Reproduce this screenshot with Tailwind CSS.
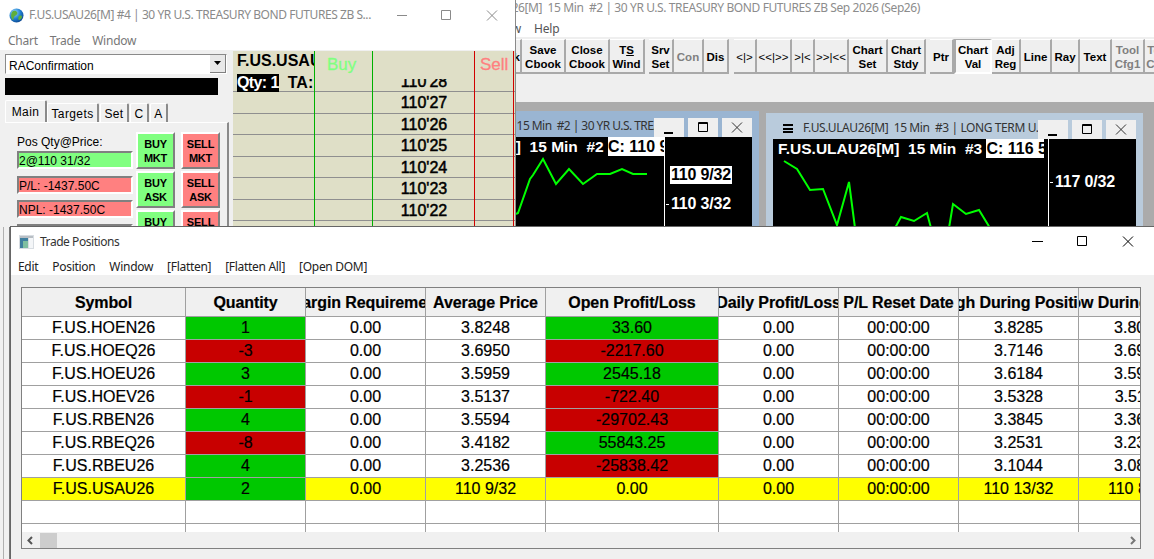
<!DOCTYPE html>
<html>
<head>
<meta charset="utf-8">
<script src="https://cdn.jsdelivr.net/npm/@tailwindcss/browser@4"></script>
</head>
<body class="m-0 overflow-hidden">
<div class="relative w-[1154px] h-[559px] overflow-hidden bg-[#ababab] font-['Liberation_Sans',sans-serif] text-black">

  <!-- Main window chrome -->
  <div class="absolute left-0 top-0 w-[1154px] flex flex-col">
    <div class="h-[37px] bg-white relative">
      <div class="absolute right-[234px] top-0 h-[15px] flex items-center whitespace-nowrap font-['Noto_Sans',sans-serif] text-[12px] text-[#8c8c8c] tracking-[-0.4px]">F.US.USAU26[M]&nbsp; 15 Min&nbsp; #2 | 30 YR U.S. TREASURY BOND FUTURES ZB Sep 2026 (Sep26)</div>
      <div class="absolute left-[470px] top-[21px] w-[100px] flex whitespace-nowrap font-['Noto_Sans',sans-serif] text-[12px] leading-[16px] text-[#555] tracking-[-0.2px]">
        <span class="w-[51px] text-right">Window</span><span class="ml-[13px]">Help</span>
      </div>
    </div>
    <div class="h-[65px] bg-[#efefef] pt-[2px] pl-[516px]">
      <div class="flex h-[35px] w-[660px] text-[11.5px] leading-[14px] font-bold text-center whitespace-nowrap *:shrink-0 *:flex *:items-center *:justify-center *:pt-[1px] *:border-r-2 *:border-b-2 *:border-[#a9a9a9] *:border-t *:border-t-white">
        <div class="w-[6px] overflow-hidden justify-end!">k</div>
        <div class="w-[44px]"><span>Save<br>Cbook</span></div>
        <div class="w-[44px]"><span>Close<br>Cbook</span></div>
        <div class="w-[35px]"><span>T<span class="underline">S</span><br>Wind</span></div>
        <div class="w-[4px] !border-0"></div>
        <div class="w-[25px]"><span>Srv<br>Set</span></div>
        <div class="w-[30px] text-[#808080]">Con</div>
        <div class="w-[25px]">Dis</div>
        <div class="w-[5px] !border-0"></div>
        <div class="w-[23px] font-normal">&lt;|&gt;</div>
        <div class="w-[35px] font-normal">&lt;&lt;|&gt;&gt;</div>
        <div class="w-[23px] font-normal">&gt;|&lt;</div>
        <div class="w-[34px] font-normal">&gt;&gt;|&lt;&lt;</div>
        <div class="w-[39px]"><span>Chart<br>Set</span></div>
        <div class="w-[38px]"><span>Chart<br>Stdy</span></div>
        <div class="w-[4px] !border-0"></div>
        <div class="w-[24px]">Ptr</div>
        <div class="w-[38px] !border-r-white !border-b-white !border-t-[#a9a9a9] border-l-2 border-l-[#a9a9a9] bg-[#f7f7f7]"><span>Chart<br>Val</span></div>
        <div class="w-[29px]"><span>Adj<br>Reg</span></div>
        <div class="w-[31px]">Line</div>
        <div class="w-[28px]">Ray</div>
        <div class="w-[32px]">Text</div>
        <div class="w-[33px] text-[#808080]"><span>Tool<br>Cfg1</span></div>
        <div class="w-[30px] text-[#808080]"><span>Tool<br>Cfg2</span></div>
      </div>
    </div>
  </div>

  <!-- Chart #2 -->
  <div class="absolute left-[400px] top-[111px] w-[359px] h-[130px] bg-[#9ab5d2] pl-[7px] pr-[7px]">
    <div class="h-[26px] relative flex">
      <div class="flex-1 overflow-hidden pt-[6px] pl-[21px] font-['Noto_Sans',sans-serif] text-[12px] leading-[18px] whitespace-nowrap text-[#333] tracking-[-0.55px]">F.US.USAU26[M]&nbsp; 15 Min&nbsp; #2 | 30 YR U.S. TREASURY BOND FUTURES ZB Sep 2026</div>
      <div class="flex gap-[4px] mt-[7px] h-[19px] w-[98px] shrink-0">
        <div class="w-[30px] bg-[#efefef] flex items-center justify-center"><svg width="30" height="19" viewBox="0 0 30 19"><path d="M10 15h9" stroke="#000" stroke-width="2"/></svg></div>
        <div class="w-[30px] bg-[#efefef] flex items-center justify-center"><svg width="30" height="19" viewBox="0 0 30 19"><path d="M10.500 4.500h9v9h-9z M10 5.500h10" stroke="#000" fill="none"/></svg></div>
        <div class="w-[30px] bg-[#efefef] flex items-center justify-center"><svg width="30" height="19" viewBox="0 0 30 19"><path d="M10 4.500l10 10M20 4.500l-10 10" stroke="#333" fill="none"/></svg></div>
      </div>
    </div>
    <div class="relative h-[100px] bg-black text-white">
      <div class="absolute left-0 top-0 w-[258px] h-[100px] border-r border-white overflow-hidden">
        <div class="absolute right-0 top-0 h-[19px] flex text-[16px] leading-[19px] font-bold whitespace-nowrap">
          <span class="text-[15.5px]">F.US.USAU26[M]&nbsp; 15 Min&nbsp; #2&nbsp;</span><span class="bg-white text-black w-[56px] overflow-hidden">C: 110 9/32</span>
        </div>
      </div>
      <div class="absolute left-[263px] top-[29px] w-[62px] h-[18px] bg-white text-black flex items-center justify-center text-[16px] font-bold whitespace-nowrap tracking-[-0.15px]">110 9/32</div>
      <div class="absolute left-[263px] top-[58px] w-[62px] h-[18px] flex items-center justify-center text-[16px] font-bold whitespace-nowrap tracking-[-0.15px]">110 3/32</div>
      <div class="absolute left-[259px] top-[67px] w-[3px] h-px bg-white"></div>
      <svg class="absolute left-0 top-0" width="258" height="100" viewBox="407 137 258 100"><polyline fill="none" stroke="#00ff00" stroke-width="2" points="516,214 518,213 530,179 533,175 543,159 556,184 569,169 583,184 597,174 610,174 622,169 633,174 647,174"/></svg>
    </div>
  </div>

  <!-- Chart #3 -->
  <div class="absolute left-[766px] top-[113px] w-[377px] h-[130px] bg-[#b9cbdc] pl-[7px] pr-[7px]">
    <div class="h-[26px] relative flex">
      <div class="w-[10px] ml-[10px] mr-[10px] mt-[11px] h-[9px] flex flex-col justify-between shrink-0 *:h-[2px] *:bg-black"><div></div><div></div><div></div></div>
      <div class="flex-1 overflow-hidden pt-[6px] font-['Noto_Sans',sans-serif] text-[12px] leading-[18px] whitespace-nowrap text-[#333] tracking-[-0.4px]">F.US.ULAU26[M]&nbsp; 15 Min&nbsp; #3 | LONG TERM U.S. TREASURY BOND FUTURES</div>
      <div class="flex gap-[4px] mt-[7px] h-[19px] w-[98px] shrink-0">
        <div class="w-[30px] bg-[#efefef] flex items-center justify-center"><svg width="30" height="19" viewBox="0 0 30 19"><path d="M10 15h9" stroke="#000" stroke-width="2"/></svg></div>
        <div class="w-[30px] bg-[#efefef] flex items-center justify-center"><svg width="30" height="19" viewBox="0 0 30 19"><path d="M10.500 4.500h9v9h-9z M10 5.500h10" stroke="#000" fill="none"/></svg></div>
        <div class="w-[30px] bg-[#efefef] flex items-center justify-center"><svg width="30" height="19" viewBox="0 0 30 19"><path d="M10 4.500l10 10M20 4.500l-10 10" stroke="#333" fill="none"/></svg></div>
      </div>
    </div>
    <div class="relative h-[100px] bg-black text-white">
      <div class="absolute left-0 top-0 w-[276px] h-[100px] border-r border-white overflow-hidden">
        <div class="absolute left-[5px] top-0 h-[19px] flex text-[16px] leading-[19px] font-bold whitespace-nowrap">
          <span class="text-[15.5px]">F.US.ULAU26[M]&nbsp; 15 Min&nbsp; #3&nbsp;</span><span class="bg-white text-black w-[58px] overflow-hidden">C: 116 5/32</span>
        </div>
      </div>
      <div class="absolute left-[281px] top-[34px] w-[62px] h-[18px] flex items-center justify-center text-[16px] font-bold whitespace-nowrap tracking-[-0.15px]">117 0/32</div>
      <div class="absolute left-[277px] top-[43px] w-[3px] h-px bg-white"></div>
      <svg class="absolute left-0 top-0" width="276" height="100" viewBox="773 139 276 100"><polyline fill="none" stroke="#00ff00" stroke-width="2" points="784,161 797,169 810,190 823,189 837,225 849,182 855,228"/><polyline fill="none" stroke="#00ff00" stroke-width="2" points="895,228 901,217 914,221 927,213 931,228"/><polyline fill="none" stroke="#00ff00" stroke-width="2" points="949,228 953,204 966,214 979,210 990,228"/></svg>
    </div>
  </div>

  <!-- DOM window -->
  <div class="absolute left-0 top-0 w-[516px] h-[227px] bg-[#f0f0f0] border-r border-[#8a8a8a] flex flex-col">
    <div class="h-[50px] bg-white shrink-0 relative font-['Noto_Sans',sans-serif] text-[12px]">
      <div class="flex items-center h-[30px] pl-[9px]">
        <svg width="15" height="15" viewBox="0 0 15 15" class="shrink-0"><defs><radialGradient id="g" cx="0.35" cy="0.3" r="0.8"><stop offset="0" stop-color="#9fdcff"/><stop offset="0.55" stop-color="#1f7fd0"/><stop offset="1" stop-color="#0b3f86"/></radialGradient></defs><circle cx="7.500" cy="7.500" r="7" fill="url(#g)"/><path d="M3 4c2-2 4-1 5 0s0 3-2 4-1 4-2 4-3-4-1-8zM10 8c2-1 3 0 3 1s-2 3-3 3-1-3 0-4z" fill="#5fae3a"/></svg>
        <span class="ml-[5px] text-[#8a8a8a] tracking-[-0.44px] whitespace-nowrap w-[345px] shrink-0 overflow-hidden">F.US.USAU26[M] #4 | 30 YR U.S. TREASURY BOND FUTURES ZB S...</span>
        <svg class="ml-[15px] shrink-0" width="120" height="30" viewBox="0 0 120 30"><path d="M8 15.500h10" stroke="#8a8a8a" fill="none"/><path d="M52.500 10.500h9v9h-9z" stroke="#8a8a8a" fill="none"/><path d="M98 10.500l10 10M108 10.500l-10 10" stroke="#8a8a8a" fill="none"/></svg>
      </div>
      <div class="flex gap-[12px] pl-[8px] h-[20px] pt-[2px] items-center text-[#777] tracking-[-0.25px]"><span>Chart</span><span>Trade</span><span>Window</span></div>
    </div>
    <div class="flex flex-1 min-h-0 overflow-hidden">
      <!-- left panel -->
      <div class="w-[233px] shrink-0 pl-[5px] pt-[4px] text-[12px] overflow-hidden">
        <div class="w-[222px] h-[20px] bg-white border border-[#8a8a8a] border-r-white border-b-white flex items-center justify-between">
          <span class="pl-[3px] pt-[3px]">RAConfirmation</span>
          <div class="w-[16px] h-[18px] bg-[#e8e8e8] border-r border-b border-[#808080] flex items-center justify-center"><svg width="8" height="5" viewBox="0 0 8 5"><path d="M0 0h7L3.500 4z" fill="#000"/></svg></div>
        </div>
        <div class="w-[213px] h-[17px] bg-black mt-[4px]"></div>
        <div class="flex mt-[5px] h-[22px] items-end text-[12px] tracking-[0.4px] *:flex *:items-center *:justify-center *:bg-[#f0f0f0] *:border-t *:border-l *:border-white *:border-r-2 *:border-r-[#8a8a8a] *:rounded-t-[2px]">
          <div class="w-[42px] h-[22px]">Main</div>
          <div class="w-[52px] h-[19px] mr-[1px] pt-[1px]">Targets</div>
          <div class="w-[29px] h-[19px] mr-[1px] pt-[1px]">Set</div>
          <div class="w-[19px] h-[19px] mr-[1px] pt-[1px]">C</div>
          <div class="w-[18px] h-[19px] pt-[1px]">A</div>
        </div>
        <div class="w-[224px] h-[110px] border-t border-t-white border-r-2 border-r-[#8a8a8a] flex pl-[12px] pt-[9px] gap-[3px]">
          <div class="w-[116px] flex flex-col text-[12px]">
            <div class="h-[18px] leading-[20px]">Pos Qty@Price:</div>
            <div class="h-[18px] mt-px bg-[#80ff80] border-2 border-[#808080] border-r-white border-b-white leading-[17px]">2@110 31/32</div>
            <div class="h-[18px] mt-[7px] bg-[#ff8080] border-2 border-[#808080] border-r-white border-b-white leading-[17px]">P/L: -1437.50C</div>
            <div class="h-[18px] mt-[6px] bg-[#ff8080] border-2 border-[#808080] border-r-white border-b-white leading-[17px]">NPL: -1437.50C</div>
            <div class="h-[18px] mt-[6px] bg-[#efefef] border-2 border-[#808080] border-r-white border-b-white"></div>
          </div>
          <div class="w-[39px] flex flex-col gap-[2px] text-[11px] leading-[14px] font-bold text-center tracking-[-0.2px] *:h-[37px] *:shrink-0 *:flex *:items-center *:justify-center *:pt-[1px] *:bg-[#80ff80] *:border-2 *:border-l-white *:border-t-white *:border-r-[#808080] *:border-b-[#808080]">
            <div><span>BUY<br>MKT</span></div><div><span>BUY<br>ASK</span></div><div><span>BUY<br>BID</span></div>
          </div>
          <div class="w-[39px] ml-[3px] flex flex-col gap-[2px] text-[11px] leading-[14px] font-bold text-center tracking-[-0.2px] *:h-[37px] *:shrink-0 *:flex *:items-center *:justify-center *:pt-[1px] *:bg-[#ff8080] *:border-2 *:border-l-white *:border-t-white *:border-r-[#808080] *:border-b-[#808080]">
            <div><span>SELL<br>MKT</span></div><div><span>SELL<br>ASK</span></div><div><span>SELL<br>BID</span></div>
          </div>
        </div>
      </div>
      <!-- DOM ladder -->
      <div class="relative flex-1 mt-px bg-[#dfdfc7] overflow-hidden">
        <div class="h-[40px] relative z-10">
          <div class="absolute left-[4px] top-0 w-[77px] overflow-hidden whitespace-nowrap text-[16px] leading-[20px] font-bold">F.US.USAUD</div>
          <div class="absolute left-[4px] top-[23px] flex w-[77px] overflow-hidden whitespace-nowrap text-[16px] leading-[18px] font-bold"><span class="bg-black text-white w-[45px] text-center tracking-[-0.6px]">Qty: 1</span><span class="ml-[9px]">TA: 0</span></div>
          <div class="absolute left-[94px] top-[1px] text-[#80ff80] text-[17px] [-webkit-text-stroke:0.3px_#80ff80]">Buy</div>
          <div class="absolute left-[247px] top-[1px] text-[#ff8080] text-[17px] [-webkit-text-stroke:0.3px_#ff8080]">Sell</div>
        </div>
        <div class="relative flex flex-col mt-[-20px] text-center text-[16px] leading-[21px] [-webkit-text-stroke:0.5px_black]">
          <div class="h-[21px] shrink-0 border-b border-[#8f8f8f] [clip-path:inset(8px_0_0_0)]"><div class="pl-[138px] w-[244px]">110'28</div></div>
          <div class="h-[22px] shrink-0 border-b border-[#8f8f8f]"><div class="pl-[138px] w-[244px]">110'27</div></div>
          <div class="h-[21px] shrink-0 border-b border-[#8f8f8f]"><div class="pl-[138px] w-[244px]">110'26</div></div>
          <div class="h-[22px] shrink-0 border-b border-[#8f8f8f]"><div class="pl-[138px] w-[244px]">110'25</div></div>
          <div class="h-[21px] shrink-0 border-b border-[#8f8f8f]"><div class="pl-[138px] w-[244px]">110'24</div></div>
          <div class="h-[22px] shrink-0 border-b border-[#8f8f8f]"><div class="pl-[138px] w-[244px]">110'23</div></div>
          <div class="h-[21px] shrink-0 border-b border-[#8f8f8f]"><div class="pl-[138px] w-[244px]">110'22</div></div>
        </div>
        <div class="absolute left-[81px] top-0 bottom-0 w-px bg-[#00b000]"></div>
        <div class="absolute left-[139px] top-0 bottom-0 w-px bg-[#00b000]"></div>
        <div class="absolute left-[241px] top-0 bottom-0 w-px bg-[#d00000]"></div>
        <div class="absolute left-[280px] top-0 bottom-0 w-px bg-[#d00000]"></div>
      </div>
    </div>
  </div>

  <!-- Backing edge at lower left -->
  <div class="absolute left-0 top-[227px] w-[10px] h-[332px] bg-[#f0f0f0] border-r border-[#777] flex">
    <div class="w-[4px] border-r border-[#b0b0b0]"></div>
  </div>

  <!-- Trade Positions window -->
  <div class="absolute left-[10px] top-[226px] w-[1144px] h-[333px] bg-[#f0f0f0] border-t border-l border-[#666] flex flex-col">
    <div class="h-[48px] bg-white shrink-0 font-['Noto_Sans',sans-serif] text-[12px] text-[#333]">
      <div class="h-[30px] flex items-center pl-[8px] relative">
        <svg width="15" height="14" viewBox="0 0 15 14"><rect width="15" height="14" fill="#d8dde2"/><rect x="1" y="1" width="13" height="2" fill="#b8bec4"/><rect x="1" y="3" width="8" height="10" fill="#3f7f9f"/><rect x="4" y="6" width="5" height="7" fill="#7fbfa0"/><rect x="10" y="3" width="4" height="10" fill="#f4f6f8"/></svg>
        <span class="ml-[6px] tracking-[-0.45px]">Trade Positions</span>
        <svg class="absolute right-[12px] top-[4px]" width="110" height="20" viewBox="0 0 110 20"><path d="M0 10.500h11" stroke="#000" fill="none"/><path d="M45.500 5.500h9v9h-9z" stroke="#000" fill="none"/><path d="M91 5.500l10 10M101 5.500l-10 10" stroke="#000" fill="none"/></svg>
      </div>
      <div class="h-[18px] pt-[2px] flex items-center gap-[14px] pl-[7px] text-[#222] tracking-[-0.3px]"><span>Edit</span><span>Position</span><span>Window</span><span>[Flatten]</span><span>[Flatten All]</span><span>[Open DOM]</span></div>
    </div>
    <div class="ml-[10px] mt-[12px] w-[1120px] h-[262px] border border-[#808080] bg-white overflow-hidden flex flex-col">
      <div class="h-[244px] overflow-hidden shrink-0">
        <div class="w-[1177px] grid grid-cols-[164px_120px_120px_120px_173px_120px_120px_120px_120px] grid-rows-[29px_repeat(10,23px)] text-[16px] text-center [-webkit-text-stroke:0.2px_black] *:flex *:items-center *:justify-center *:overflow-hidden *:whitespace-nowrap *:border-r *:border-b *:border-[#a0a0a0]">
          <div class="bg-[#f0f0f0] font-bold tracking-[-0.1px] pt-[2px]">Symbol</div>
          <div class="bg-[#f0f0f0] font-bold tracking-[-0.1px] pt-[2px]">Quantity</div>
          <div class="bg-[#f0f0f0] font-bold tracking-[-0.1px] pt-[2px]">Margin Requirement</div>
          <div class="bg-[#f0f0f0] font-bold tracking-[-0.1px] pt-[2px]">Average Price</div>
          <div class="bg-[#f0f0f0] font-bold tracking-[-0.1px] pt-[2px]">Open Profit/Loss</div>
          <div class="bg-[#f0f0f0] font-bold tracking-[-0.1px] pt-[2px]">Daily Profit/Loss</div>
          <div class="bg-[#f0f0f0] font-bold tracking-[-0.1px] pt-[2px]">P/L Reset Date</div>
          <div class="bg-[#f0f0f0] font-bold tracking-[-0.1px] pt-[2px]">High During Position</div>
          <div class="bg-[#f0f0f0] font-bold tracking-[-0.1px] pt-[2px]">Low During Position</div>

          <div>F.US.HOEN26</div><div class="bg-[#00c800]">1</div><div>0.00</div><div>3.8248</div><div class="bg-[#00c800]">33.60</div><div>0.00</div><div>00:00:00</div><div>3.8285</div><div>3.8020</div>
          <div>F.US.HOEQ26</div><div class="bg-[#c80000]">-3</div><div>0.00</div><div>3.6950</div><div class="bg-[#c80000]">-2217.60</div><div>0.00</div><div>00:00:00</div><div>3.7146</div><div>3.6920</div>
          <div>F.US.HOEU26</div><div class="bg-[#00c800]">3</div><div>0.00</div><div>3.5959</div><div class="bg-[#00c800]">2545.18</div><div>0.00</div><div>00:00:00</div><div>3.6184</div><div>3.5920</div>
          <div>F.US.HOEV26</div><div class="bg-[#c80000]">-1</div><div>0.00</div><div>3.5137</div><div class="bg-[#c80000]">-722.40</div><div>0.00</div><div>00:00:00</div><div>3.5328</div><div>3.5110</div>
          <div>F.US.RBEN26</div><div class="bg-[#00c800]">4</div><div>0.00</div><div>3.5594</div><div class="bg-[#c80000]">-29702.43</div><div>0.00</div><div>00:00:00</div><div>3.3845</div><div>3.3620</div>
          <div>F.US.RBEQ26</div><div class="bg-[#c80000]">-8</div><div>0.00</div><div>3.4182</div><div class="bg-[#00c800]">55843.25</div><div>0.00</div><div>00:00:00</div><div>3.2531</div><div>3.2320</div>
          <div>F.US.RBEU26</div><div class="bg-[#00c800]">4</div><div>0.00</div><div>3.2536</div><div class="bg-[#c80000]">-25838.42</div><div>0.00</div><div>00:00:00</div><div>3.1044</div><div>3.0820</div>
          <div class="bg-[#ffff00]">F.US.USAU26</div><div class="bg-[#00c800]">2</div><div class="bg-[#ffff00]">0.00</div><div class="bg-[#ffff00]">110 9/32</div><div class="bg-[#ffff00]">0.00</div><div class="bg-[#ffff00]">0.00</div><div class="bg-[#ffff00]">00:00:00</div><div class="bg-[#ffff00]">110 13/32</div><div class="bg-[#ffff00]">110 8/32</div>
          <div></div><div></div><div></div><div></div><div></div><div></div><div></div><div></div><div></div>
          <div></div><div></div><div></div><div></div><div></div><div></div><div></div><div></div><div></div>
        </div>
      </div>
      <div class="flex-1 bg-[#f0f0f0] flex items-center justify-between pl-[5px] pr-[4px]">
        <div class="flex items-center gap-[7px]">
          <svg width="6" height="9" viewBox="0 0 6 9"><path d="M5 1L1.500 4.500 5 8" fill="none" stroke="#555" stroke-width="2"/></svg>
          <div class="w-[17px] h-[15px] bg-[#cdcdcd]"></div>
        </div>
        <svg width="6" height="9" viewBox="0 0 6 9"><path d="M1 1l3.500 3.500L1 8" fill="none" stroke="#777" stroke-width="2"/></svg>
      </div>
    </div>
  </div>
</div>
</body>
</html>
